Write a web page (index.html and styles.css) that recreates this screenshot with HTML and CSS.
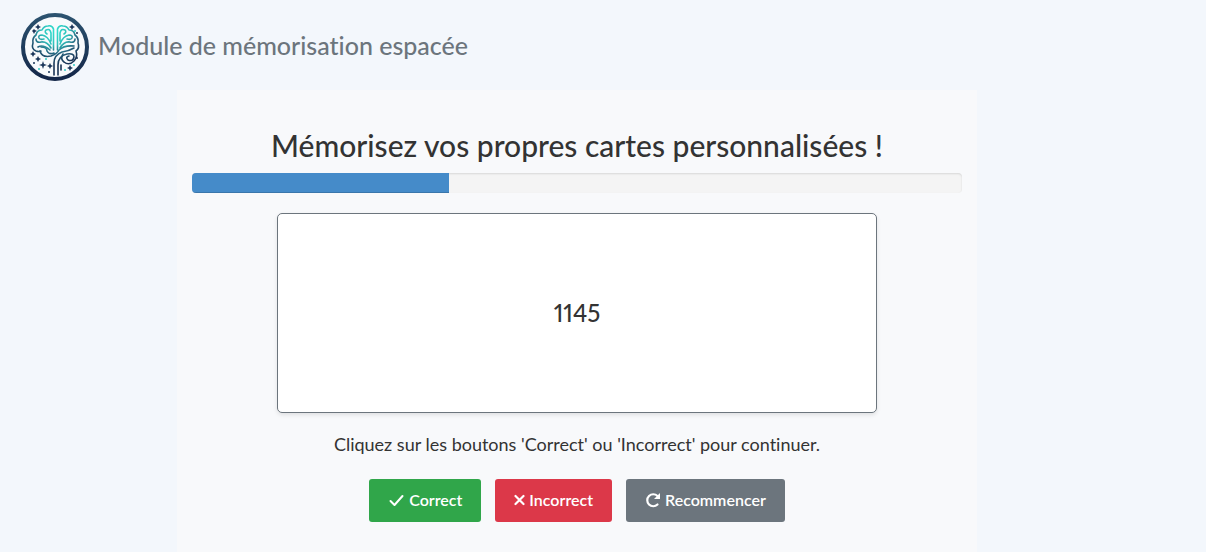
FILE: index.html
```html
<!DOCTYPE html>
<html lang="fr">
<head>
<meta charset="utf-8">
<meta name="viewport" content="width=device-width, initial-scale=1">
<title>Module de mémorisation espacée</title>
<link rel="stylesheet" href="styles.css">
</head>
<body>
<header class="header">
  <svg class="logo" viewBox="0 0 68 68" aria-hidden="true">
    <defs>
      <linearGradient id="ring" x1="0" y1="0" x2="0" y2="1"><stop offset="0" stop-color="#2b526f"/><stop offset="1" stop-color="#142749"/></linearGradient>
      <radialGradient id="brain" gradientUnits="userSpaceOnUse" cx="34" cy="18" r="34"><stop offset="0" stop-color="#2fe0cf"/><stop offset=".4" stop-color="#2fc0bb"/><stop offset=".68" stop-color="#24607c"/><stop offset="1" stop-color="#193355"/></radialGradient>
    </defs>
    <circle cx="34" cy="34" r="32" fill="#f8fafc" stroke="url(#ring)" stroke-width="4"/>
    <g fill="none" stroke="url(#brain)" stroke-width="1.6" stroke-linecap="round" stroke-linejoin="round">
      <path d="M32.500 37V16Q31 12 27 13Q23 13 21 17Q16 17 15 22Q11 25 12 30Q10 36 15 38Q18 39 20 38"/>
      <path d="M36.500 37V16Q38 12 42 13Q46 13 48 17Q53 17 54 22Q58 25 57 30Q59 35 55 38Q57 44 53 48Q48 53 43 49Q39 46 42 41"/>
      <path d="M30 28V20Q29 15 25 17Q23 19 26 21M30 31Q27 23 21 22Q17 22 18 25Q19 27 23 26M30 35Q26 28 20 29Q15 30 15 26M29 37Q22 31 17 34"/>
      <path d="M39 28V20Q40 15 44 17Q46 19 43 21M39 31Q42 23 48 22Q52 22 51 25Q50 27 46 26M39 35Q43 28 49 29Q54 30 54 26"/>
      <path d="M20 34Q26 34 26 38Q28 42 33 40M19 38Q21 45 30 43Q36 41 38 37Q43 32 53 33"/>
      <path d="M33 62V50Q33 42 41 39Q48 38 53 35M37 62V52Q37 43 46 41Q53 40 53 44Q52 49 47 47Q44 44 48 43"/>
      <path d="M40 57V52"/>
    </g>
    <g fill="#1b365a">
      <path d="M17 11l1 2 2 1-2 1-1 2-1-2-2-1 2-1zM13 16l1 1 2 1-2 1-1 2-1-2-1-1 1-1zM51 11l1 2 2 1-2 1-1 2-1-2-2-1 2-1zM12 38l1 2 2 1-2 1-1 2-1-2-2-1 2-1zM17 43l1 2 2 1-2 1-1 2-1-2-2-1 2-1zM22 48l1 3 3 1-3 1-1 3-1-3-3-1 3-1zM29 50l1 2 2 1-2 1-1 2-1-2-2-1 2-1zM49 52l1 2 2 1-2 1-1 2-1-2-2-1 2-1z"/>
      <circle cx="56" cy="20" r="1"/><circle cx="13" cy="50" r="1"/><circle cx="28" cy="59" r="1"/><circle cx="56" cy="45" r="1"/>
    </g>
    <g fill="#35cbc3"><circle cx="54" cy="18" r="1"/><circle cx="18" cy="56" r="1"/><circle cx="44" cy="57" r="1"/><circle cx="53" cy="52" r="1"/><circle cx="25" cy="46" r="1"/></g>
  </svg>
  <span class="brand">Module de mémorisation espacée</span>
</header>
<main class="main">
  <section class="panel">
    <h1 class="title">Mémorisez vos propres cartes personnalisées !</h1>
    <div class="progress" role="progressbar" aria-label="Progression" aria-valuemin="0" aria-valuemax="3" aria-valuenow="1">
      <div class="progress-bar" style="width: 33.33%"></div>
    </div>
    <div class="card">1145</div>
    <p class="hint">Cliquez sur les boutons 'Correct' ou 'Incorrect' pour continuer.</p>
    <div class="actions">
      <button class="btn btn-correct" type="button">
        <svg class="icon-check" viewBox="0 0 16 14" aria-hidden="true"><path d="M2 8l4 4 8-9" fill="none" stroke="currentColor" stroke-width="2" stroke-linecap="round" stroke-linejoin="round"/></svg>
        Correct
      </button>
      <button class="btn btn-incorrect" type="button">
        <svg class="icon-cross" viewBox="0 0 11 14" aria-hidden="true"><path d="M1.500 3l8 8M9.500 3l-8 8" fill="none" stroke="currentColor" stroke-width="2.200" stroke-linecap="round"/></svg>
        Incorrect
      </button>
      <button class="btn btn-restart" type="button">
        <svg class="icon-restart" viewBox="0 0 16 16" aria-hidden="true"><path d="M12.500 12.500A6 6 0 1 1 12.500 4" fill="none" stroke="currentColor" stroke-width="2.200" stroke-linecap="round"/><path d="M15 1v6H9z" fill="currentColor"/></svg>
        Recommencer
      </button>
    </div>
  </section>
</main>
</body>
</html>
```
FILE: styles.css
```css
* {
  box-sizing: border-box;
}

body {
  display: flex;
  flex-direction: column;
  min-height: 100vh;
  margin: 0;
  background: #f3f7fc;
  color: #333;
  font-family: Lato, "Open Sans", sans-serif;
  font-variant-ligatures: none;
}

.header {
  display: flex;
  align-items: center;
  gap: 9px;
  padding: 13px 21px 9px;
}

.logo {
  flex: none;
  width: 68px;
  height: 68px;
}

.brand {
  padding-bottom: 4px;
  color: #6c757d;
  font-size: 25px;
  font-weight: 500;
  line-height: 32px;
}

.main {
  display: flex;
  flex: 1;
  justify-content: center;
  padding-right: 52px;
}

.panel {
  display: flex;
  flex-direction: column;
  align-items: center;
  width: 100%;
  max-width: 800px;
  padding: 38px 15px 30px;
  background: #f8f9fb;
}

.title {
  margin: 0 0 11px;
  font-size: 30px;
  font-weight: 500;
  line-height: 34px;
  text-align: center;
}

.progress {
  width: 100%;
  height: 20px;
  margin-bottom: 20px;
  overflow: hidden;
  border-radius: 4px;
  background: #f4f4f4;
  box-shadow: inset 0 1px 2px rgba(0, 0, 0, 0.12);
}

.progress-bar {
  height: 100%;
  background: #458bc9;
  box-shadow: inset 0 -1px 0 rgba(0, 0, 0, 0.15);
}

.card {
  display: flex;
  align-items: center;
  justify-content: center;
  width: 100%;
  max-width: 600px;
  min-height: 200px;
  padding-bottom: 2px;
  border: 1px solid #6c757d;
  border-radius: 5px;
  background: #fff;
  box-shadow: 0 2px 4px rgba(0, 0, 0, 0.1);
  font-size: 24px;
  font-weight: 500;
  font-variant-numeric: proportional-nums;
}

.hint {
  margin: 18px 0 22px;
  font-size: 18px;
  line-height: 26px;
  text-align: center;
}

.actions {
  display: flex;
  flex-wrap: wrap;
  justify-content: center;
  gap: 14px;
}

.btn {
  display: flex;
  align-items: center;
  gap: 4px;
  padding: 9px 19px 11px;
  border: 0;
  border-radius: 3px;
  color: #fff;
  font: 600 16px/23px Lato, "Open Sans", sans-serif;
  cursor: pointer;
}

.btn-correct {
  background: #30a64a;
}

.btn-incorrect {
  background: #dc3849;
}

.btn-restart {
  background: #6c757d;
}

.icon-check {
  width: 17px;
  height: 14px;
}

.icon-cross {
  width: 11px;
  height: 14px;
}

.icon-restart {
  width: 16px;
  height: 16px;
}
```
